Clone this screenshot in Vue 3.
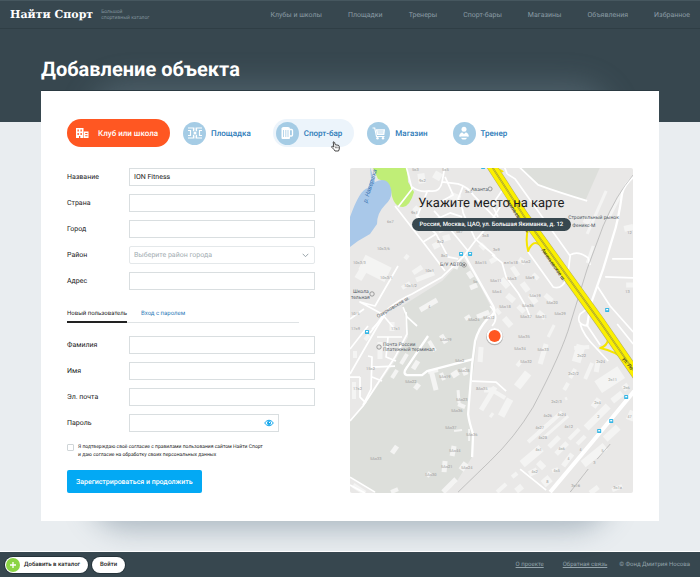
<script setup>
import { ref } from 'vue'

const nav = ['Клубы и школы', 'Площадки', 'Тренеры', 'Спорт-бары', 'Магазины', 'Объявления', 'Избранное']
const types = [
  { id: 'club', label: 'Клуб или школа' },
  { id: 'court', label: 'Площадка' },
  { id: 'bar', label: 'Спорт-бар' },
  { id: 'shop', label: 'Магазин' },
  { id: 'coach', label: 'Тренер' },
]
const active = ref('club')
const name = ref('ION Fitness')

// Minor streets of the map
const streets = [
  'M45 39L73 75L95 104',
  'M20 166L38 142Q48 133 62 127L92 110L113 90L125 74L138 59L150 40',
  'M62 20Q70 26 79 24Q90 26 92 15L95 -1M56 -1L62 22L48 40M92 15L108 17Q118 20 124 29L146 52',
  'M113 19L108 32Q113 42 113 46L125 72L145 89M95 10L103 28L92 34M77 25L67 50L75 62',
  'M73 75L86 67L98 90L108 92M66 48L86 67M84 44L100 62L118 84M80 55L100 46L112 50',
  'M48 99L25 139L10 135L32 147L43 160M33 151L22 162M0 152L14 142',
  'M67 159L57 150L53 140M56 145L57 167L45 190L13 239L0 254',
  'M0 207L27 160L38 143M0 182L18 159M18 189L22 190L21 222L13 238M22 200L45 199M38 170L36 190L46 194M27 170L52 170M10 210L10 230L16 236M0 210L10 210M22 210L32 214',
  'M122 214L146 215L156 224',
  'M157 7L165 12L220 89L218 105Q214 124 203 120L178 85',
  'M220 88Q228 83 238 91L240 98',
  'M168 -1L188 18Q210 26 237 34M157 7L154 -1M153 22L142 38L148 50',
  'M262 92L283 92M255 110L283 111M247 119L260 139L283 165M267 157L283 177',
  'M230 157Q233 168 245 180L258 194M236 157L250 178M237 159Q225 157 230 147Q236 143 241 138',
  'M142 88L152 96L156 110L168 126L176 140L180 150M142 159Q150 150 140 139',
  'M170 302L196 323M0 310L25 325M0 318L15 326',
]
// Buildings: x1, y1, x2, y2, thickness
const buildings = [
  [12, 95, 38, 108, 16], [8, 112, 14, 102, 8], [63, 106, 72, 100, 5], [66, 113, 84, 106, 5], [52, 121, 60, 116, 4],
  [70, 143, 87, 133, 5], [55, 92, 58, 88, 4], [88, 63, 95, 60, 7], [93, 72, 100, 70, 6], [68, 12, 75, 11, 10],
  [84, 7, 91, 11, 8], [100, 28, 110, 32, 7], [64, 44, 68, 40, 5], [83, 80, 89, 77, 6], [101, 98, 108, 101, 4],
  [118, 105, 122, 111, 5], [120, 121, 127, 118, 5], [115, 152, 120, 149, 4], [127, 150, 139, 145, 5],
  [130, 77, 135, 82, 5], [140, 95, 147, 91, 5], [151, 112, 158, 120, 6], [162, 100, 168, 109, 5], [157, 128, 164, 134, 6],
  [172, 116, 178, 124, 6], [180, 128, 186, 136, 6], [168, 139, 174, 145, 5], [188, 145, 195, 151, 5], [154, 151, 161, 159, 6],
  [195, 128, 202, 134, 5], [146, 142, 150, 147, 4], [169, 92, 175, 96, 5], [183, 107, 188, 112, 4], [256, 24, 237, 67, 3],
  [272, 25, 258, 52, 3], [237, 96, 243, 79, 3], [276, 118, 283, 118, 5], [274, 62, 283, 60, 6], [234, 52, 240, 55, 7],
  [5, 184, 5, 191, 4], [30, 175, 30, 192, 5], [42, 155, 42, 164, 5], [15, 173, 19, 168, 4], [4, 215, 4, 232, 4],
  [79, 174, 85, 184, 4], [91, 168, 96, 176, 5], [51, 197, 57, 187, 4], [63, 202, 68, 194, 5], [42, 211, 47, 203, 4],
  [81, 203, 86, 223, 5], [78, 205, 88, 203, 4], [91, 206, 94, 213, 4], [102, 209, 108, 205, 6], [113, 201, 116, 208, 5],
  [65, 222, 69, 217, 5], [108, 223, 109, 236, 3], [108, 237, 115, 240, 4], [104, 264, 112, 263, 2], [42, 286, 47, 279, 5],
  [102, 289, 104, 279, 5], [94, 305, 95, 294, 5], [111, 303, 116, 296, 6], [77, 306, 80, 309, 5], [93, 325, 106, 312, 5],
  [119, 262, 119, 274, 2], [130, 195, 131, 180, 5], [131, 243, 145, 220, 5], [140, 250, 143, 246, 3], [134, 223, 142, 223, 5],
  [151, 249, 160, 232, 7], [167, 220, 178, 206, 8], [140, 222, 155, 231, 4], [144, 168, 153, 172, 3],
  [190, 197, 196, 177, 5], [198, 170, 204, 158, 3], [167, 199, 171, 194, 4], [226, 195, 231, 178, 9], [224, 181, 239, 180, 4],
  [235, 212, 242, 196, 4], [246, 205, 248, 194, 5], [248, 220, 271, 205, 14], [214, 223, 218, 216, 4], [220, 211, 225, 202, 4],
  [243, 240, 249, 232, 6], [236, 261, 258, 239, 7], [262, 234, 272, 226, 6], [273, 222, 278, 218, 6], [255, 272, 268, 260, 7],
  [233, 297, 255, 279, 8], [240, 326, 248, 320, 5], [227, 277, 235, 269, 4], [219, 272, 229, 262, 4], [213, 299, 222, 287, 5],
  [206, 287, 217, 276, 5], [199, 280, 209, 270, 5], [193, 271, 218, 249, 3], [188, 266, 212, 245, 4], [178, 275, 204, 252, 4],
  [172, 297, 191, 281, 8], [188, 295, 194, 301, 6], [179, 307, 187, 303, 6], [193, 317, 200, 311, 8], [202, 304, 208, 302, 4],
  [162, 310, 167, 306, 4], [166, 324, 172, 319, 6], [147, 325, 156, 317, 4], [279, 253, 283, 244, 7], [262, 323, 272, 319, 4],
  [3, 318, 15, 326, 5], [41, 325, 48, 322, 4], [215, 232, 217, 231, 3],
]
const labels = [
  [62, 4, '5к3'], [69, 15, '9к2'], [92, 4, '5к5'], [115, 26, '3к5'], [61, 47, '9к1'], [37, 56, '6к7'], [27, 83, '10к3/6'],
  [3, 97, '10к3/3'], [30, 112, '10к3/1'], [75, 105, '10к1'], [54, 120, '10к1/2'], [1, 148, '10/5'], [87, 76, '8к2'],
  [91, 90, '8к3'], [106, 66, '5к7'], [132, 70, '3к8'], [143, 84, '3к9'], [125, 97, '8Ак15'], [123, 116, '5к'],
  [140, 115, '5Ак11'], [118, 154, '5Ак24'], [133, 152, '5Ак12'], [78, 141, '4'], [154, 97, 'вл1к18'], [171, 96, '5Ак2'],
  [175, 112, '5Ак9'], [157, 113, '5Ак3'], [179, 130, '5Ак19'], [142, 126, '5Ак4'], [149, 141, '5Ак18'], [172, 140, '5Ак36'],
  [196, 137, '5Ак20'], [204, 148, '5Ак29'], [170, 151, '5Ак37'], [185, 151, '5Ак31'], [277, 67, '12'], [275, 126, '13'],
  [1, 163, '17к9'], [41, 163, '17к1'], [16, 203, '15к2'], [3, 223, '17к2'], [90, 174, '5Ак79'], [105, 195, '5Ак2'],
  [89, 211, '5Ак19'], [108, 205, '5Ак28'], [55, 216, '5Ак22'], [106, 234, '5Ак23'], [101, 245, '5Ак36'], [95, 262, '5Ак37'],
  [116, 269, '5Ак36'], [99, 285, '5Ак44'], [20, 293, '5Ак33'], [91, 301, '5Ак21'], [111, 302, '5Ак24'], [75, 309, '5Ак30'],
  [126, 223, '8Ак35'], [168, 171, '5Ак35'], [164, 183, '5Ак34'], [187, 184, '5Ак33'], [170, 196, '5Ак32'], [227, 190, '2к22'],
  [218, 208, '2к2/2'], [246, 196, '2к24'], [258, 214, '2к11'], [201, 236, '2к2/3'], [244, 237, '2к4'], [273, 222, '2к6'],
  [247, 251, '2'], [193, 250, '4к26'], [207, 249, '4к24'], [185, 262, '4к27'], [214, 261, '4к12'], [188, 272, '4к28'],
  [185, 284, '4к1'], [208, 283, '4к6'], [217, 293, '4'], [229, 284, '4'], [181, 306, '4к2'], [203, 305, '4к5'],
  [196, 316, '8'], [243, 297, '3'], [251, 285, '5'], [221, 320, '3к1б'], [263, 322, '3к1а'], [277, 251, '47'],
]
const stops = [[111, 87], [120, 87], [257, 143], [133, 0], [17, 165], [276, 230], [261, 254], [249, 264]]
const highway = 'M137 -8L142 0L173 48L217 109L250 155L290 213'
</script>

<template>
  <div class="page">
    <header class="top">
      <a href="#" class="logo">Найти Спорт</a>
      <span class="slogan">Большой<br>спортивный каталог</span>
      <nav class="nav">
        <a v-for="n in nav" :key="n" href="#">{{ n }}</a>
      </nav>
    </header>

    <main class="main">
      <h1>Добавление объекта</h1>
      <section class="card">
        <div class="types">
          <button
            v-for="t in types" :key="t.id" type="button"
            :class="['type', { active: active === t.id, hovered: t.id === 'bar' }]"
            @click="active = t.id"
          >
            <span class="disc">
              <svg v-if="t.id === 'club'" width="14" height="14" viewBox="0 0 14 14">
                <path fill="#fff" fill-rule="evenodd" d="M1 2h7.500v10H1zM2.500 3.500v2h1.300v-2zM5.500 3.500v2h1.300v-2zM2.500 7v2h1.300V7zM5.500 7v2h1.300V7zM4 10v2h1.300v-2zM9 5.500h4.500V12H9zM10.200 7v1h2.300V7zM10.200 9.200v1h2.300v-1z" />
              </svg>
              <svg v-else-if="t.id === 'court'" width="16" height="14" viewBox="0 0 16 14">
                <g fill="none" stroke="#fff" stroke-width="1.200">
                  <path d="M1 2h5.500v3.200M6.500 8.800V12H1M15 2H9.500v3.200M9.500 8.800V12H15" />
                  <path d="M1 4.500h2.500v5H1M15 4.500h-2.500v5H15" />
                  <path d="M8 1.500v3M8 9.500v3" stroke-width=".8" />
                </g>
                <circle cx="8" cy="7" r="1.500" fill="#fff" />
              </svg>
              <svg v-else-if="t.id === 'bar'" width="14" height="14" viewBox="0 0 14 14">
                <path fill="#fff" d="M1.500 2.500q0-1.500 2-1.500h4.500q2 0 2 1.500V12q0 1-1 1H2.500q-1 0-1-1z" />
                <path fill="none" stroke="#a5cce5" stroke-width=".8" d="M3.500 4v7M5.800 4v7M8 4v7" />
                <path fill="none" stroke="#fff" stroke-width="1.300" d="M10 3.500h1.500q1 0 1 1v4.500q0 1-1 1H10" />
              </svg>
              <svg v-else-if="t.id === 'shop'" width="14" height="14" viewBox="0 0 14 14">
                <path fill="none" stroke="#fff" stroke-width="1.200" d="M.5 2h2.200l1.800 8.500h8" />
                <path fill="#fff" d="M3.800 3.200H13L12.300 9H5z" />
                <path fill="none" stroke="#a5cce5" stroke-width=".7" d="M5.500 5h6M5.800 7h5.500" />
                <circle cx="5.500" cy="12.200" r="1.200" fill="#fff" /><circle cx="11" cy="12.200" r="1.200" fill="#fff" />
              </svg>
              <svg v-else width="14" height="14" viewBox="0 0 14 14">
                <circle cx="7" cy="3.200" r="2.500" fill="#fff" />
                <path fill="#fff" d="M5 6.200L7 8l2-1.800q2.500.8 3 4L10 11.200H4l-2-1q.5-3.200 3-4zM4 12h6l-1.500 1.500h-3z" />
                <path stroke="#a5cce5" stroke-width=".7" d="M3.500 10.800h7" />
              </svg>
            </span>
            {{ t.label }}
            <svg v-if="t.id === 'bar'" class="cursor" width="9" height="11" viewBox="0 0 9 11">
              <path fill="#fff" stroke="#333" stroke-width=".9" stroke-linejoin="round" d="M2.200 1q.9-.6 1.300.3l.8 2.500 2.800.4q1.200.3 1.200 1.500v2.300L7.500 10H4L2.800 8.300.7 6.200q-.3-1 .8-.9l1.300.7z" />
              <path stroke="#333" stroke-width=".6" d="M4.400 5.500v1.700M5.700 5.600v1.700M7 5.700v1.600" />
            </svg>
          </button>
        </div>

        <div class="columns">
          <form class="form" @submit.prevent>
            <div class="fields">
              <label for="f-name">Название</label><input id="f-name" v-model="name" type="text">
              <label for="f-country">Страна</label><input id="f-country" type="text">
              <label for="f-city">Город</label><input id="f-city" type="text">
              <label for="f-area">Район</label>
              <div class="pick">
                <select id="f-area"><option>Выберите район города</option></select>
                <svg width="7" height="5" viewBox="0 0 7 5"><path fill="none" stroke="#8f9ca3" stroke-width=".9" d="M.7.800L3.500 3.700 6.300.8" /></svg>
              </div>
              <label for="f-addr">Адрес</label><input id="f-addr" type="text">
            </div>

            <div class="modes">
              <button type="button" class="mode current">Новый пользователь</button>
              <button type="button" class="mode">Вход с паролем</button>
            </div>

            <div class="fields">
              <label for="f-last">Фамилия</label><input id="f-last" type="text">
              <label for="f-first">Имя</label><input id="f-first" type="text">
              <label for="f-mail">Эл. почта</label><input id="f-mail" type="email">
              <label for="f-pass">Пароль</label>
              <div class="pass">
                <input id="f-pass" type="password">
                <button type="button" aria-label="Показать пароль">
                  <svg width="10" height="8" viewBox="0 0 10 8">
                    <path fill="none" stroke="#0ea5ec" stroke-width="1" d="M.6 4Q5-1.600 9.400 4 5 9.600.6 4z" />
                    <circle cx="5" cy="4" r="2" fill="#0ea5ec" /><circle cx="5.500" cy="3.400" r=".6" fill="#fff" />
                  </svg>
                </button>
              </div>
            </div>

            <label class="agree">
              <input type="checkbox">
              <span>Я подтверждаю своё согласие с правилами пользования сайтом Найти Спорт<br>и даю согласие на обработку своих персональных данных</span>
            </label>
            <button type="submit" class="submit">Зарегистрироваться и продолжить</button>
          </form>

          <div class="map">
            <svg class="canvas" viewBox="0 0 283 327" preserveAspectRatio="xMidYMid slice">
              <rect width="283" height="327" fill="#e9e8e7" />
              <path fill="#dddfdb" d="M52 139L92 114L113 92L128 115L142 142L128 162L124 197L118 247L123 267L122 290L105 317L92 327H28L0 310V254L15 237L45 194L58 170L54 145z" />
              <path fill="#dddfdb" d="M168 0L190 19L235 34L250 0z" />
              <path fill="#c0ee77" d="M22 -1L28 12Q40 15 41 24Q43 40 53 40Q60 39 64 25L58 15L57 -1z" />
              <path fill="#a9c8e9" d="M20 0L25 15Q38 9 41 22Q43 31 35 38Q27 46 27 57L20 67L8 74L0 80V50Q10 22 18 21L21 12z" />
              <g stroke="#f4f4f3">
                <line v-for="(b, i) in buildings" :key="i" :x1="b[0]" :y1="b[1]" :x2="b[2]" :y2="b[3]" :stroke-width="b[4]" />
              </g>
              <g fill="none" stroke="#fff" stroke-width="1.700" stroke-linejoin="round">
                <path v-for="s in streets" :key="s" :d="s" />
              </g>
              <g fill="none" stroke="#fff" stroke-width="2.300" stroke-linejoin="round">
                <path d="M115 89L143 139Q147 147 138 151Q128 162 125 174L122 197L118 247Q119 255 123 267L122 290" />
                <path d="M78 169L57 200Q52 207 57 208H72L77 204L123 192" />
                <path d="M283 10Q274 18 272 26Q268 55 263 69L253 102L240 139L237 159" />
              </g>
              <path fill="none" stroke="#fff" stroke-width="4" d="M284 224L242 275L200 325" />
              <path fill="none" stroke="#a6a6a6" stroke-width=".6" d="M283 8Q266 28 253 59L237 102L220 157Q212 185 183 240Q165 270 140 294L108 325" />
              <path fill="none" stroke="#888" stroke-width=".6" stroke-dasharray="1 .4" d="M260 277L247 292M238 302L220 325" />

              <g fill="none" stroke-linejoin="round">
                <g stroke="#f6e600" stroke-width="2">
                  <path d="M178 62Q175 72 178 84Q183 72 190 78M140 1Q150 2 153 5M156 14L152 20" />
                  <path d="M258 172Q257 179 250 181Q265 184 276 194" />
                </g>
                <path :d="highway" stroke="#b4ad62" stroke-width="10" />
                <path :d="highway" stroke="#fbf000" stroke-width="9" />
                <path :d="highway" stroke="#918d45" stroke-width="1.600" />
                <path :d="highway" stroke="#fbf000" stroke-width=".7" />
              </g>

              <g class="house"><text v-for="(l, i) in labels" :key="i" :x="l[0]" :y="l[1]">{{ l[2] }}</text></g>
              <g fill="#35b6e6">
                <rect v-for="(s, i) in stops" :key="i" :x="s[0] - 2" :y="s[1] - 2" width="4" height="4" rx=".6" />
              </g>
              <g fill="#fff">
                <rect v-for="(s, i) in stops" :key="i" :x="s[0] - 1" :y="s[1] - 1" width="2" height="1.300" />
              </g>
              <g fill="#e9e8e7" stroke="#888" stroke-width=".8">
                <circle cx="140" cy="22" r="2" /><circle cx="114" cy="98" r="2.200" /><circle cx="22" cy="127" r="2.200" /><circle cx="29" cy="180" r="2.200" />
              </g>
              <circle cx="114" cy="98" r=".9" fill="#555" />
              <g class="place">
                <text x="121" y="24">Аванта</text>
                <text x="90" y="99">Б/У АВТО</text>
                <text x="3" y="126">Школа</text><text x="1" y="132">тельная</text>
                <text x="33" y="179">Почта России</text><text x="33" y="184">Платежный терминал</text>
                <text x="218" y="52">Строительный рынок</text><text x="222" y="60">Феникс-М</text>
                <text transform="translate(28 151) rotate(-31)">Озерковское ш.</text>
              </g>
              <g class="road">
                <text transform="translate(191 83) rotate(55)">Аминьевское ш.</text>
                <text transform="translate(156 34) rotate(57)">Аминьевское ш.</text>
                <text transform="translate(272 192) rotate(53)">ул. Ло</text>
              </g>
              <text class="river" transform="translate(17 36) rotate(-73)">р. Навершка</text>
              <circle cx="144.500" cy="169.700" r="8.600" fill="#000" opacity=".22" />
              <circle cx="144.500" cy="169" r="8" fill="#fff" />
              <circle cx="144.500" cy="169" r="6" fill="#ff5722" />
            </svg>
            <h2>Укажите место на карте</h2>
            <p>Россия, Москва, ЦАО, ул. Большая Якиманка, д. 12</p>
          </div>
        </div>
      </section>
    </main>

    <footer class="bottom">
      <button type="button" class="pill add">
        <svg width="14" height="14" viewBox="0 0 14 14"><circle cx="7" cy="7" r="7" fill="#8bd444" /><path stroke="#fff" stroke-width="1.300" d="M7 4v6M4 7h6" /></svg>
        Добавить в каталог
      </button>
      <button type="button" class="pill">Войти</button>
      <div class="links">
        <a href="#">О проекте</a>
        <a href="#">Обратная связь</a>
      </div>
      <span>© Фонд Дмитрия Носова</span>
    </footer>
  </div>
</template>

<style>
body { margin: 0; }
</style>

<style scoped>
* { box-sizing: border-box; }
.page {
  min-height: 100vh;
  display: flex;
  flex-direction: column;
  font-family: Roboto, "Liberation Sans", sans-serif;
  font-size: 7px;
  text-rendering: geometricPrecision;
  color: #222;
  background: linear-gradient(#37474f 122px, #e9edf0 122px);
}
button, input, select { font: inherit; color: inherit; margin: 0; text-rendering: inherit; }
button { border: 0; background: none; padding: 0; cursor: pointer; white-space: nowrap; }
svg { display: block; flex: none; }

.top {
  height: 29px;
  display: flex;
  align-items: center;
  padding: 0 10px;
  border-top: 1px solid #46575f;
  border-bottom: 1px solid #2f3e45;
}
.logo { font: bold 11px/16px "DejaVu Serif", serif; color: #fff; text-decoration: none; white-space: nowrap; }
.slogan { margin-left: 8px; font-size: 5px; line-height: 6px; color: #81929b; white-space: nowrap; }
.nav { margin-left: auto; display: flex; gap: 26px; }
.nav a { color: #8a9ba4; text-decoration: none; white-space: nowrap; }

.main { flex: 1; display: flex; flex-direction: column; padding: 26px 41px 30px; position: relative; z-index: 0; }
h1 { margin: 0 0 8px; font-size: 20px; line-height: 28px; font-weight: 700; color: #fff; }
.card {
  flex: 1;
  position: relative;
  padding: 28px 26px 27px;
  box-shadow: inset 0 0 0 1000px #fff, 0 -1px 0 #2b3a42;
}
.card::before, .card::after { content: ""; position: absolute; z-index: -1; left: 55px; right: 55px; height: 60px; border-radius: 30px; }
.card::before { top: 4px; box-shadow: 0 -4px 30px 8px rgba(150, 175, 190, .25); }
.card::after { bottom: 4px; box-shadow: 0 6px 28px 6px rgba(75, 100, 120, .4); }
.types, .columns { position: relative; }

.types { display: flex; gap: 10px; }
.type {
  position: relative;
  height: 28px;
  display: flex;
  align-items: center;
  gap: 5px;
  padding: 0 12px 0 3px;
  border-radius: 14px;
  font-size: 8px;
  font-weight: 500;
  color: #2b7ab8;
}
.disc { width: 23px; height: 23px; border-radius: 50%; background: #a5cce5; display: grid; place-items: center; }
.hovered { background: #ecf4fb; }
.active { background: #ff5722; color: #fff; }
.active .disc { background: none; }
.cursor { position: absolute; right: 14px; bottom: -5px; }

.columns { display: grid; grid-template-columns: 7fr 8fr; gap: 35px; margin-top: 21px; }
.form { display: flex; flex-direction: column; align-items: stretch; }
.fields { display: grid; grid-template-columns: 62px 1fr; row-gap: 8px; align-items: center; }
.fields input, .fields select {
  width: 100%;
  height: 18px;
  padding: 0 4px;
  border: 1px solid #d9dee0;
  border-radius: 0;
  background: #fff;
  outline: none;
}
.fields input:focus { border-color: #a5cce5; }
.pick { position: relative; }
.pick select { appearance: none; border-radius: 2px; border-color: #e4e8ea; color: #a3adb2; }
.pick svg { position: absolute; right: 6px; top: 7px; pointer-events: none; }
.pass { position: relative; width: 150px; }
.pass button { position: absolute; right: 5px; top: 5px; }

.modes { display: flex; gap: 14px; margin: 18px 16px 13px 0; border-bottom: 1px solid #dfe3e5; }
.mode { height: 15px; font-size: 6px; line-height: 12px; padding-bottom: 3px; margin-bottom: -1px; color: #2b7ab8; }
.current { color: #222; border-bottom: 2px solid #222; padding-bottom: 1px; }

.agree { display: flex; gap: 4px; margin: 11px 0; font-size: 5px; line-height: 8px; white-space: nowrap; }
.agree input { appearance: none; width: 7px; height: 7px; border: 1px solid #cfd5d8; border-radius: 1px; background: #fff; margin-top: 1px; }
.agree input:checked { background: #03a9f4; }
.submit { align-self: flex-start; height: 23px; padding: 0 9px; border-radius: 2px; background: #03a9f4; color: #fff; font-weight: 500; }

.map { position: relative; border-radius: 2px; overflow: hidden; display: flex; flex-direction: column; align-items: center; padding-top: 28px; }
.canvas { position: absolute; inset: 0; width: 100%; height: 100%; }
.map h2, .map p { position: relative; margin: 0; white-space: nowrap; }
.map h2 { font-size: 13px; line-height: 16px; font-weight: 400; color: #1d1d1d; }
.map p { margin-top: 6px; height: 13px; padding: 0 8px; border-radius: 7px; background: #37474f; color: #fff; font-size: 6px; line-height: 13px; font-weight: 500; }
.house { font-size: 4px; fill: #999; }
.place { font-size: 5px; fill: #555c66; }
.road { font-size: 5px; font-weight: 500; fill: #4a4720; }
.river { font-size: 6px; font-style: italic; fill: #3b74b3; }

.bottom {
  display: flex;
  align-items: center;
  gap: 4px;
  height: 26px;
  padding: 0 10px 0 5px;
  background: #37474f;
  border-top: 1px solid #fff;
  color: #93a3ab;
  font-size: 6px;
  white-space: nowrap;
}
.pill { height: 16px; padding: 0 8px; border-radius: 8px; background: #fff; color: #222; font-weight: 500; box-shadow: 0 0 0 1px #26343b; }
.add { display: flex; align-items: center; gap: 4px; padding: 0 8px 0 1px; }
.links { margin-left: auto; display: flex; gap: 19px; padding-right: 8px; }
.links a { color: inherit; }
</style>
